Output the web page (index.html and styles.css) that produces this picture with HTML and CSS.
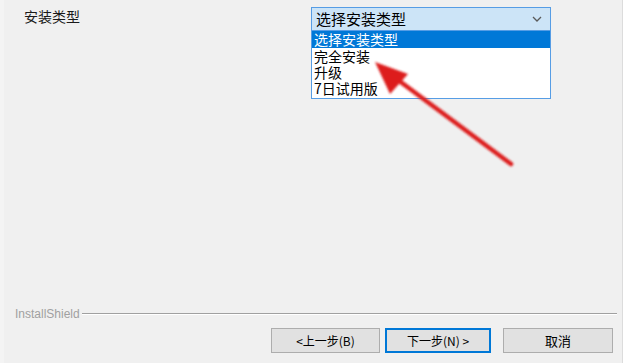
FILE: index.html
```html
<!DOCTYPE html>
<html lang="zh-CN">
<head>
  <meta charset="UTF-8" />
  <title>安装类型 - InstallShield</title>
  <link rel="stylesheet" href="styles.css">
</head>
<body>
  <div class="dialog">
    <div class="content">
      <div class="field-label">安装类型</div>
      <div class="combo">
        <div class="combo-box">
          <span class="combo-value">选择安装类型</span>
          <svg class="chevron" width="10" height="6" viewBox="0 0 10 6">
            <path d="M1 1 L5 5 L9 1" fill="none" stroke="#5a5a5a" stroke-width="1.3"/>
          </svg>
        </div>
        <ul class="combo-list">
          <li class="selected">选择安装类型</li>
          <li>完全安装</li>
          <li>升级</li>
          <li>7日试用版</li>
        </ul>
      </div>
    </div>

    <div class="brand">
      <span class="brand-name">InstallShield</span>
      <span class="brand-rule"></span>
    </div>

    <div class="buttons">
      <button class="btn btn-back">&lt;上一步(B)</button>
      <button class="btn btn-default">下一步(N) &gt;</button>
      <button class="btn btn-cancel">取消</button>
    </div>

    <svg class="annotation" width="623" height="363" viewBox="0 0 623 363">
      <defs>
        <filter id="soft" x="-20%" y="-20%" width="140%" height="140%">
          <feGaussianBlur stdDeviation="0.8"/>
        </filter>
      </defs>
      <g filter="url(#soft)">
        <line x1="511" y1="164" x2="398" y2="80" stroke="#dd1f1f" stroke-width="4.5" stroke-linecap="round"/>
        <polygon points="375,62 408,74 390,94" fill="#dd1f1f"/>
      </g>
    </svg>
  </div>
</body>
</html>
```

FILE: styles.css
```css
* {
  margin: 0;
  padding: 0;
  box-sizing: border-box;
}

body {
  background-color: #f0f0f0;
  font-family: "Noto Sans CJK SC", "Microsoft YaHei", sans-serif;
  color: #000;
}

.dialog {
  position: relative;
  width: 623px;
  height: 363px;
  display: flex;
  flex-direction: column;
  border-left: 4px solid #f4f4f4;
  border-right: 1px solid #dcdcdc;
}

.content {
  height: 306px;
  display: flex;
  padding: 7px 0 0 20px;
}

.field-label {
  width: 287px;
  font-size: 14px;
  line-height: 18px;
  color: #1a1a1a;
}

.combo {
  position: relative;
  width: 240px;
}

.combo-box {
  height: 24px;
  display: flex;
  align-items: center;
  justify-content: space-between;
  padding: 0 8px 0 4px;
  background-color: #cce4f7;
  border: 1px solid #569de5;
}

.combo-value {
  font-size: 15px;
  line-height: 20px;
}

.combo-list {
  position: absolute;
  top: 23px;
  left: 0;
  width: 240px;
  list-style: none;
  background-color: #fff;
  border: 1px solid #569de5;
  padding-bottom: 2px;
}

.combo-list li {
  font-size: 14px;
  line-height: 16px;
  height: 16px;
  padding-left: 2px;
}

.combo-list li.selected {
  background-color: #0078d7;
  color: #fff;
  height: 17px;
  line-height: 17px;
}

.brand {
  height: 16px;
  display: flex;
  align-items: center;
  padding-left: 11px;
  padding-right: 5px;
}

.brand-name {
  font-family: "Liberation Sans", Arial, sans-serif;
  font-size: 12px;
  color: #a0a0a0;
  margin-right: 2px;
}

.brand-rule {
  flex: 1;
  height: 2px;
  border-top: 1px solid #a0a0a0;
  border-bottom: 1px solid #fff;
}

.buttons {
  display: flex;
  justify-content: flex-end;
  margin-top: 6px;
  padding-right: 9px;
}

.btn {
  height: 25px;
  background-color: #e1e1e1;
  border: 1px solid #adadad;
  font-family: "Noto Sans CJK SC", "Microsoft YaHei", sans-serif;
  font-size: 12px;
  color: #000;
}

.btn-back {
  width: 109px;
}

.btn-default {
  width: 106px;
  margin-left: 5px;
  border: 2px solid #0078d7;
}

.btn-cancel {
  width: 110px;
  margin-left: 12px;
  font-size: 13px;
}

.annotation {
  position: absolute;
  top: 0;
  left: -4px;
  pointer-events: none;
}
```
